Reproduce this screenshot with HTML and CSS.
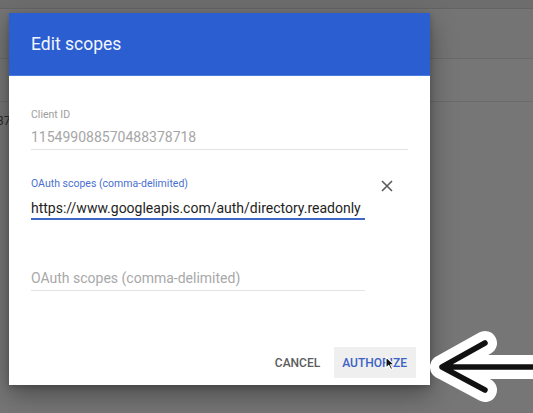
FILE: index.html
```html
<!DOCTYPE html>
<html lang="en">
<head>
    <meta charset="UTF-8">
    <meta name="viewport" content="width=device-width, initial-scale=1.0">
    <title>Edit scopes</title>
    <link rel="stylesheet" href="styles.css">
</head>
<body>

    <!-- Halaman di belakang (sudah digelapkan) -->
    <div class="page">
        <div class="topstrip"></div>
        <div class="toolbar"></div>
        <div class="tabs"></div>
        <div class="row">37</div>
    </div>

    <!-- Dialog -->
    <div class="dialog">
        <div class="dialog-header">Edit scopes</div>

        <div class="dialog-body">
            <div class="field">
                <label class="field-label">Client ID</label>
                <div class="field-value">115499088570488378718</div>
            </div>

            <div class="scope-row">
                <div class="field scope-field">
                    <label class="field-label active">OAuth scopes (comma-delimited)</label>
                    <div class="field-input">https://www.googleapis.com/auth/directory.readonly</div>
                </div>
                <button class="remove-btn" aria-label="Remove">
                    <svg width="12" height="12" viewBox="0 0 12 12">
                        <path d="M1 1 L11 11 M11 1 L1 11" stroke="#5a5a5a" stroke-width="1.6" fill="none"/>
                    </svg>
                </button>
            </div>

            <div class="field scope-field empty">
                <div class="field-placeholder">OAuth scopes (comma-delimited)</div>
            </div>
        </div>

        <div class="dialog-actions">
            <button class="btn cancel-btn">Cancel</button>
            <button class="btn authorize-btn">Authorize</button>
        </div>
    </div>

    <!-- Kursor mouse -->
    <svg class="cursor" width="11" height="15" viewBox="0 0 11 15">
        <path d="M1 1 L1 12 L3.8 9.4 L5.8 13.6 L7.6 12.8 L5.6 8.7 L9.2 8.7 Z" fill="#111" stroke="#fff" stroke-width="1.1" stroke-linejoin="round"/>
    </svg>

    <!-- Panah anotasi -->
    <svg class="annotation" width="133" height="93" viewBox="0 0 133 93">
        <path d="M140 47 L42 47 M85 23 L42 47 L85 70" stroke="#fff" stroke-width="24" stroke-linecap="round" stroke-linejoin="round" fill="none"/>
        <path d="M140 47 L42 47 M85 23 L42 47 L85 70" stroke="#111" stroke-width="5.5" stroke-linecap="round" stroke-linejoin="round" fill="none"/>
    </svg>

</body>
</html>
```

FILE: styles.css
```css
* {
    margin: 0;
    padding: 0;
    box-sizing: border-box;
    font-family: Roboto, "Noto Sans", Arial, sans-serif;
}

body {
    width: 533px;
    height: 413px;
    overflow: hidden;
    position: relative;
    background: #767676;
}

/* Halaman belakang */
.topstrip {
    height: 9px;
    background: #6d6d6d;
    border-bottom: 1px solid #646464;
}

.toolbar {
    height: 50px;
    background: #747474;
    border-bottom: 1px solid #6a6a6a;
}

.tabs {
    height: 43px;
    background: #767676;
    border-bottom: 1px solid #6b6b6b;
}

.row {
    padding-top: 11px;
    font-size: 12px;
    line-height: 16px;
    color: #2a2a2a;
    text-indent: -3px;
}

/* Dialog */
.dialog {
    position: absolute;
    left: 9px;
    top: 13px;
    width: 421px;
    height: 372px;
    background: #fff;
    box-shadow: 0 10px 24px rgba(0, 0, 0, 0.35), 0 2px 6px rgba(0, 0, 0, 0.2);
    display: flex;
    flex-direction: column;
}

.dialog-header {
    height: 63px;
    padding: 19px 22px 0;
    background: #2b5ed1;
    border-bottom: 1px solid #4a7ae0;
    color: #f3f6ff;
    font-size: 17.5px;
    line-height: 24px;
}

.dialog-body {
    flex: 1;
    padding: 33px 22px 0;
}

.field {
    display: flex;
    flex-direction: column;
}

.field-label {
    font-size: 10.5px;
    line-height: 12px;
    color: #9e9e9e;
}

.field-label.active {
    color: #4a70cf;
}

.field-value {
    margin-top: 6px;
    padding-bottom: 2px;
    font-size: 14px;
    line-height: 20px;
    color: #a6a6a6;
    border-bottom: 1px solid #e3e3e3;
}

.scope-row {
    display: flex;
    align-items: flex-start;
    margin-top: 28px;
}

.scope-field {
    width: 334px;
}

.field-input {
    margin-top: 8px;
    font-size: 14px;
    line-height: 20px;
    color: #1e1e1e;
    white-space: nowrap;
    border-bottom: 2px solid #3d67c7;
}

.remove-btn {
    margin: 2px 0 0 16px;
    width: 12px;
    height: 12px;
    border: none;
    background: none;
    display: flex;
}

.scope-field.empty {
    margin-top: 28px;
    padding-top: 20px;
}

.field-placeholder {
    padding-bottom: 2px;
    font-size: 14px;
    line-height: 20px;
    color: #a8a8a8;
    border-bottom: 1px solid #e3e3e3;
}

/* Tombol */
.dialog-actions {
    display: flex;
    justify-content: flex-end;
    gap: 6px;
    padding: 0 14px 7px;
}

.btn {
    height: 31px;
    padding: 0 8px;
    border: none;
    background: none;
    font-size: 12px;
    font-weight: 500;
    text-transform: uppercase;
    cursor: pointer;
}

.cancel-btn {
    color: #5c5c5c;
}

.authorize-btn {
    padding-right: 9px;
    background: #efefef;
    color: #3b62c4;
}

/* Overlay */
.cursor {
    position: absolute;
    left: 385px;
    top: 356px;
}

.annotation {
    position: absolute;
    left: 400px;
    top: 320px;
}
```
